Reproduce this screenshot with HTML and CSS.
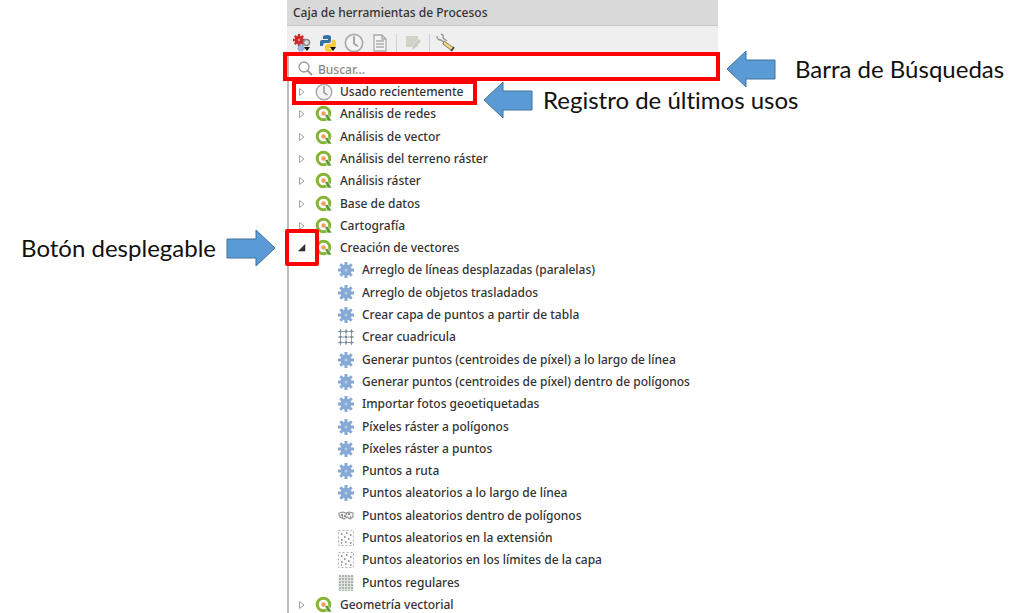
FILE: index.html
```html
<!DOCTYPE html>
<html lang="es">

<head>
    <meta charset="UTF-8" />
    <meta name="viewport" content="width=device-width, initial-scale=1.0" />
    <title>Caja de herramientas de Procesos</title>
    <link rel="stylesheet" href="styles.css">
</head>

<body>
    <!-- Shared icons -->
    <svg class="sprite" aria-hidden="true">
        <symbol id="closed" viewBox="0 0 8 10">
            <path d="M1.5 1.5v7l4.5-3.5z" fill="#fff" stroke="#a4a4a4" />
        </symbol>
        <symbol id="open" viewBox="0 0 8 10">
            <path d="M7 1.5v6.500H0.500z" fill="#333" stroke="#222" stroke-width=".5" />
        </symbol>
        <symbol id="clock" viewBox="0 0 18 18">
            <circle cx="9" cy="9" r="7.800" fill="#f3f3f3" stroke="#aaa" stroke-width="1.500" />
            <path d="M9 3v6.500l3.500 2.500" fill="none" stroke="#999" stroke-width="1.500" />
        </symbol>
        <symbol id="qgis" viewBox="0 0 18 18">
            <circle cx="8.500" cy="8.500" r="6.300" fill="#fff" stroke="#86b535" stroke-width="3" />
            <path d="M9.500 9.500h3.500l4 6.500h-4.500z" fill="#5f9a38" stroke="#fff" stroke-width=".6" />
            <circle cx="8.500" cy="8.500" r="2.200" fill="#f39a55" />
        </symbol>
        <symbol id="gear" viewBox="0 0 18 18">
            <g stroke="#86a9d6" stroke-width="3">
                <path d="M9 1v16M1 9h16M3.300 3.300l11.400 11.400M14.700 3.300L3.300 14.700" />
            </g>
            <circle cx="9" cy="9" r="5.500" fill="#86a9d6" />
            <circle cx="9" cy="9" r="1.500" fill="#b4cae8" />
        </symbol>
        <symbol id="grid" viewBox="0 0 18 18">
            <path d="M3.500 1v16M9 1v16M14.500 1v16M1 3.500h16M1 9h16M1 14.500h16" stroke="#93a3aa" fill="none" />
            <path d="M2.500 3.500h2M8 3.500h2M13.500 3.500h2M2.500 9h2M8 9h2M13.500 9h2M2.500 14.500h2M8 14.500h2M13.500 14.500h2"
                stroke="#71858e" stroke-width="2" />
        </symbol>
        <symbol id="polygon" viewBox="0 0 18 18">
            <path d="M2 6l4-1 3 1 3-1 4 1v4l-3 2-3-2-3 2-4-2-1-2z" fill="#eee" stroke="#999" stroke-width="1.200" />
            <path d="M4 8h2M7 9h2M11 7h2M13 10h1M5 10h1M9 7h1" stroke="#777" stroke-width="1.300" />
        </symbol>
        <symbol id="random" viewBox="0 0 18 18">
            <rect x="1.500" y="1.500" width="15" height="15" fill="#fbfbfb" stroke="#b5b5b5" stroke-dasharray="2 2" />
            <path d="M4 5h1.500M9 4h1.500M13 6h1.500M7 8h1.500M4 11h1.500M11 10h1.500M8 13h1.500M13 14h1.500M4 14h1"
                stroke="#777f7a" stroke-width="1.500" />
        </symbol>
        <symbol id="regular" viewBox="0 0 18 18">
            <rect x="1.500" y="1.500" width="15" height="15" fill="#dfe4df" />
            <path d="M3 1v16M6 1v16M9 1v16M12 1v16M15 1v16" stroke="#9aa59c" stroke-width="1.500"
                stroke-dasharray="2 1" />
        </symbol>
        <symbol id="arrow" viewBox="0 0 50 38">
            <path d="M1 19L20 1v9h29v19H20v8z" fill="#5b9bd5" stroke="#41719c" />
        </symbol>
    </svg>

    <main class="panel">
        <h1 class="panel-title">Caja de herramientas de Procesos</h1>

        <div class="toolbar">
            <button type="button" aria-label="Modelos">
                <svg viewBox="0 0 20 20">
                    <path d="M7 1v12M1 7h12M2.800 2.800l8.400 8.400M11.200 2.800l-8.400 8.400" stroke="#cb2b2b" stroke-width="2.400" />
                    <circle cx="7" cy="7" r="4" fill="#cb2b2b" />
                    <circle cx="7" cy="7" r="1.300" fill="#e88" />
                    <circle cx="14.500" cy="9.500" r="3" fill="#ddd" stroke="#888" stroke-width="1.500" />
                    <circle cx="9" cy="15" r="3" fill="#9db8e2" stroke="#86a4d6" stroke-dasharray="1.500 1" stroke-width="1.500" />
                    <path d="M12 14h6l-3 4z" fill="#111" />
                </svg>
            </button>
            <button type="button" aria-label="Scripts">
                <svg viewBox="0 0 20 20">
                    <path d="M2 13V9q0-2 2-2h6V6H5V4q0-2 4-2t4 2v4q0 2-2 2H7q-2 0-2 3z" fill="#3670a0" />
                    <path d="M14 7h2q2 0 2 4t-2 4h-5v1h3v1q0 2-3 2t-4-2v-4q0-2 2-2h3q2 0 2-2z" fill="#f7cb3b" />
                    <path d="M12 14h6l-3 4z" fill="#111" />
                </svg>
            </button>
            <button type="button" aria-label="Historial"><svg><use href="#clock" /></svg></button>
            <button type="button" aria-label="Resultados">
                <svg viewBox="0 0 20 20">
                    <path d="M4 2h8l4 4v12H4z" fill="#f4f4f4" stroke="#aaa" stroke-width="1.300" />
                    <path d="M12 2v4h4M6 8h8M6 11h8M6 14h8" fill="none" stroke="#aaa" stroke-width="1.300" />
                </svg>
            </button>
            <span class="separator"></span>
            <button type="button" aria-label="Editar en el lugar" disabled>
                <svg viewBox="0 0 20 20">
                    <path d="M3 3h12v11H3z" fill="#d3d2c6" />
                    <path d="M9 17l1-4 6-7 2 2-6 7z" fill="#c6c6c2" stroke="#e5e5e5" stroke-width=".6" />
                </svg>
            </button>
            <span class="separator"></span>
            <button type="button" aria-label="Opciones">
                <svg viewBox="0 0 20 20">
                    <path d="M1 3q0 4 4 4l4 3M5 1q3 1 2 4l4 3" fill="none" stroke="#999" stroke-width="1.400" />
                    <path d="M8 8l10 7-2 3-9-7z" fill="#ecd57f" stroke="#8d8568" />
                    <path d="M15 18l3-4" stroke="#444" stroke-width="1.500" />
                </svg>
            </button>
        </div>

        <div class="search">
            <svg class="search-icon" viewBox="0 0 18 18" aria-hidden="true">
                <circle cx="8" cy="7" r="5" fill="none" stroke="#999" stroke-width="1.300" />
                <path d="M11.500 10.500l4.500 4.500" stroke="#999" stroke-width="1.800" />
            </svg>
            <input type="text" aria-label="Buscar" placeholder="Buscar...">
            <span class="mark mark-search"></span>
            <div class="callout callout-search">
                <svg class="arrow"><use href="#arrow" /></svg>
                <span>Barra de Búsquedas</span>
            </div>
        </div>

        <ul class="tree">
            <li class="row">
                <button type="button" aria-label="Desplegar"><svg><use href="#closed" /></svg></button>
                <svg class="icon"><use href="#clock" /></svg>
                <span>Usado recientemente</span>
                <span class="mark mark-recent"></span>
                <div class="callout callout-recent">
                    <svg class="arrow"><use href="#arrow" /></svg>
                    <span>Registro de últimos usos</span>
                </div>
            </li>
            <li class="row">
                <button type="button" aria-label="Desplegar"><svg><use href="#closed" /></svg></button>
                <svg class="icon"><use href="#qgis" /></svg>
                <span>Análisis de redes</span>
            </li>
            <li class="row">
                <button type="button" aria-label="Desplegar"><svg><use href="#closed" /></svg></button>
                <svg class="icon"><use href="#qgis" /></svg>
                <span>Análisis de vector</span>
            </li>
            <li class="row">
                <button type="button" aria-label="Desplegar"><svg><use href="#closed" /></svg></button>
                <svg class="icon"><use href="#qgis" /></svg>
                <span>Análisis del terreno ráster</span>
            </li>
            <li class="row">
                <button type="button" aria-label="Desplegar"><svg><use href="#closed" /></svg></button>
                <svg class="icon"><use href="#qgis" /></svg>
                <span>Análisis ráster</span>
            </li>
            <li class="row">
                <button type="button" aria-label="Desplegar"><svg><use href="#closed" /></svg></button>
                <svg class="icon"><use href="#qgis" /></svg>
                <span>Base de datos</span>
            </li>
            <li class="row">
                <button type="button" aria-label="Desplegar"><svg><use href="#closed" /></svg></button>
                <svg class="icon"><use href="#qgis" /></svg>
                <span>Cartografía</span>
            </li>
            <li class="group">
                <div class="row">
                    <button type="button" aria-label="Plegar"><svg><use href="#open" /></svg></button>
                    <svg class="icon"><use href="#qgis" /></svg>
                    <span>Creación de vectores</span>
                    <span class="mark mark-toggle"></span>
                    <div class="callout callout-toggle">
                        <span>Botón desplegable</span>
                        <svg class="arrow arrow-right"><use href="#arrow" /></svg>
                    </div>
                </div>
                <ul class="children">
                    <li class="row"><svg class="icon"><use href="#gear" /></svg><span>Arreglo de líneas desplazadas (paralelas)</span></li>
                    <li class="row"><svg class="icon"><use href="#gear" /></svg><span>Arreglo de objetos trasladados</span></li>
                    <li class="row"><svg class="icon"><use href="#gear" /></svg><span>Crear capa de puntos a partir de tabla</span></li>
                    <li class="row"><svg class="icon"><use href="#grid" /></svg><span>Crear cuadricula</span></li>
                    <li class="row"><svg class="icon"><use href="#gear" /></svg><span>Generar puntos (centroides de píxel) a lo largo de línea</span></li>
                    <li class="row"><svg class="icon"><use href="#gear" /></svg><span>Generar puntos (centroides de píxel) dentro de polígonos</span></li>
                    <li class="row"><svg class="icon"><use href="#gear" /></svg><span>Importar fotos geoetiquetadas</span></li>
                    <li class="row"><svg class="icon"><use href="#gear" /></svg><span>Píxeles ráster a polígonos</span></li>
                    <li class="row"><svg class="icon"><use href="#gear" /></svg><span>Píxeles ráster a puntos</span></li>
                    <li class="row"><svg class="icon"><use href="#gear" /></svg><span>Puntos a ruta</span></li>
                    <li class="row"><svg class="icon"><use href="#gear" /></svg><span>Puntos aleatorios a lo largo de línea</span></li>
                    <li class="row"><svg class="icon"><use href="#polygon" /></svg><span>Puntos aleatorios dentro de polígonos</span></li>
                    <li class="row"><svg class="icon"><use href="#random" /></svg><span>Puntos aleatorios en la extensión</span></li>
                    <li class="row"><svg class="icon"><use href="#random" /></svg><span>Puntos aleatorios en los límites de la capa</span></li>
                    <li class="row"><svg class="icon"><use href="#regular" /></svg><span>Puntos regulares</span></li>
                </ul>
            </li>
            <li class="row">
                <button type="button" aria-label="Desplegar"><svg><use href="#closed" /></svg></button>
                <svg class="icon"><use href="#qgis" /></svg>
                <span>Geometría vectorial</span>
            </li>
        </ul>
    </main>
</body>

</html>
```

FILE: styles.css
```css
:root {
    --text: #333;
    --mark: #ff0000;
    --title-bg: #d9d9d9;
    --toolbar-bg: #efefef;
    --border: #bcbcc2;
}

* {
    box-sizing: border-box;
}

body {
    display: grid;
    grid-template-columns: 287fr 431fr 306fr;
    margin: 0;
    background: #fff;
    color: var(--text);
    font-family: "Noto Sans", "Open Sans", sans-serif;
    font-size: 12px;
    font-weight: 500;
    overflow: hidden;
}

.sprite {
    position: absolute;
    width: 0;
    height: 0;
}

button {
    display: flex;
    padding: 0;
    border: none;
    background: none;
    cursor: pointer;
}

/* Panel */
.panel {
    grid-column: 2;
    display: flex;
    flex-direction: column;
    height: calc(100vh + 3px);
}

.panel-title {
    margin: 0;
    padding: 0 6px;
    background: var(--title-bg);
    border-bottom: 1px solid #c6c6c6;
    font-size: 12px;
    font-weight: 500;
    line-height: 25px;
}

.toolbar {
    display: flex;
    align-items: center;
    gap: 6px;
    height: 29px;
    padding: 4px 5px 0;
    background: var(--toolbar-bg);
}

.toolbar svg {
    width: 20px;
    height: 20px;
}

.separator {
    width: 1px;
    height: 18px;
    background: #d0d0d0;
}

.search {
    position: relative;
    display: flex;
    align-items: center;
    gap: 4px;
    height: 26px;
    padding: 2px 7px 0;
    border-left: 2px solid var(--border);
}

.search-icon {
    width: 18px;
    height: 18px;
}

.search input {
    flex: 1;
    min-width: 0;
    padding: 0;
    border: none;
    outline: none;
    background: none;
    font: inherit;
}

.search input::placeholder {
    color: #888;
}

/* Tree */
.tree {
    flex: 1;
    display: grid;
    grid-auto-rows: 1fr;
    margin: 0;
    padding: 0;
    border-left: 2px solid var(--border);
    list-style: none;
}

.group,
.children {
    display: contents;
    list-style: none;
}

.row {
    position: relative;
    display: flex;
    align-items: center;
    gap: 7px;
    min-height: 0;
    padding-left: 9px;
    line-height: 20px;
    white-space: nowrap;
}

.row button svg {
    width: 8px;
    height: 10px;
}

.icon {
    width: 18px;
    height: 18px;
    margin-left: 2px;
}

.children .row {
    padding-left: 46px;
}

/* Marks and callouts */
.mark {
    position: absolute;
    border: 4px solid var(--mark);
    pointer-events: none;
}

.mark-search {
    inset: -3px -2px 0 -6px;
}

.mark-recent {
    top: -1px;
    left: 3px;
    width: 185px;
    height: 25px;
}

.mark-toggle {
    top: -8px;
    left: -4px;
    width: 34px;
    height: 37px;
    border-radius: 2px;
}

.callout {
    position: absolute;
    display: flex;
    align-items: center;
    color: #111;
    font-family: Lato, sans-serif;
    font-size: 24px;
    font-weight: 400;
    font-variant-ligatures: none;
    line-height: 36px;
    white-space: nowrap;
}

.arrow {
    width: 50px;
    height: 38px;
}

.arrow-right {
    transform: scaleX(-1);
}

.callout-search {
    top: -5px;
    left: 100%;
    gap: 19px;
    margin-left: 8px;
}

.callout-recent {
    top: 0;
    left: 194px;
    gap: 10px;
}

.callout-toggle {
    top: -8px;
    right: 100%;
    gap: 10px;
    margin-right: 13px;
}
```
